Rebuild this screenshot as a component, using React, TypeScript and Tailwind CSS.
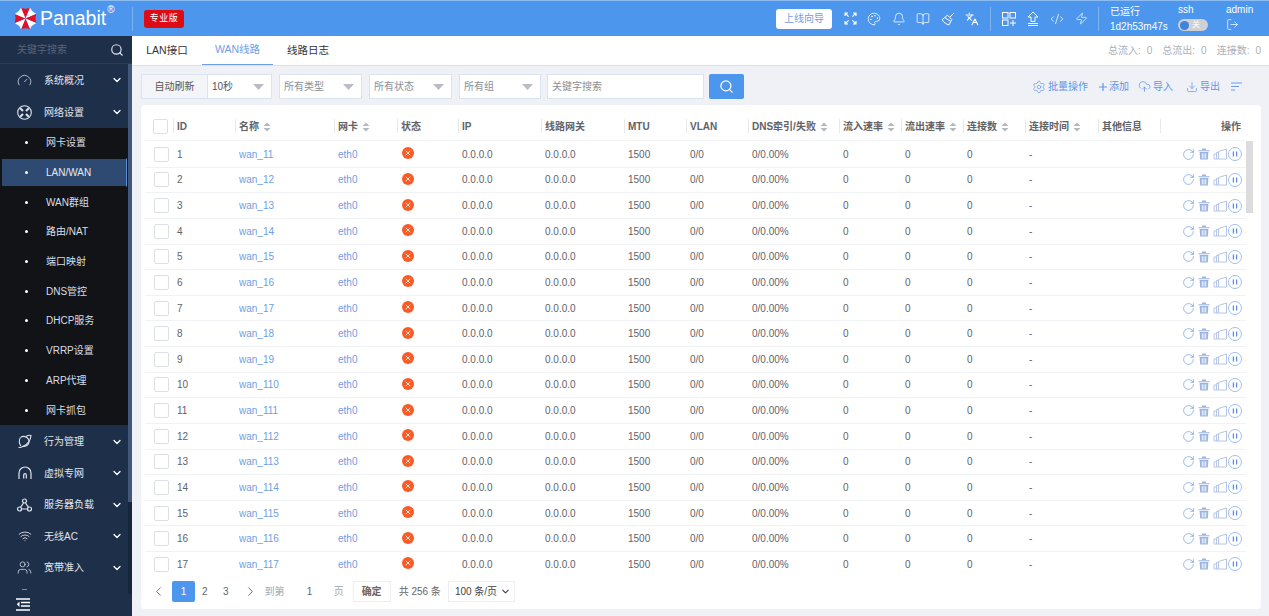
import React from "react";
import { ChevronDown, ChevronLeft, ChevronRight, Search, Gauge, Wifi, Users, Palette, Bell, BookOpen, Languages, CodeXml, Zap, LogOut, Settings, Plus, CloudUpload, Download, RotateCw, X } from "lucide-react";

const sub = ["网卡设置", "LAN/WAN", "WAN群组", "路由/NAT", "端口映射", "DNS管控", "DHCP服务", "VRRP设置", "ARP代理", "网卡抓包"];
const cols = "grid grid-cols-[32px_62px_99px_63px_61px_83px_83px_62px_62px_91px_62px_62px_62px_73px_62px_1fr]";

function Sort() {
  return (
    <svg width="8" height="10" viewBox="0 0 8 10" className="ml-1 shrink-0">
      <path d="M4 0.5 7.5 4H.5Z M.5 6H7.5L4 9.5Z" fill="#b4b8bf" />
    </svg>
  );
}

function Logo() {
  const a = [0, 45, 90, 135, 180, 225, 270, 315];
  return (
    <svg width="23" height="23" viewBox="-12 -12 24 24" className="shrink-0">
      {a.map((d, i) => (
        <path key={d} transform={`rotate(${d})`} d="M0 0 L-4.6 -11.2 Q0 -9.4 4.6 -11.2 Z" fill={i % 2 === 0 ? "#e60f24" : "#ffffff"} />
      ))}
    </svg>
  );
}

function MenuItem({ icon, label, tall }: { icon: React.ReactNode; label: string; tall?: boolean }) {
  return (
    <div className={`flex shrink-0 items-center text-[#e0e5ec] ${tall ? "h-[32px]" : "h-[31.5px]"}`}>
      <div className="flex w-[44px] justify-center pl-[6px] pr-[1px]">{icon}</div>
      <span className="flex-1 text-[10px]">{label}</span>
      <ChevronDown size={12} strokeWidth={2.6} className="mr-[5px] text-white" />
    </div>
  );
}

function Select({ label, w, dark }: { label: string; w: string; dark?: boolean }) {
  return (
    <div className={`flex h-[25px] items-center justify-between border border-[#d9e3f2] bg-white pl-[4px] pr-[7px] text-[10px] ${w} ${dark ? "text-[#555]" : "text-[#8b8f96]"}`}>
      <span>{label}</span>
      <svg width="11" height="6" viewBox="0 0 11 6"><path d="M0 0H11L5.5 6Z" fill="#b9bcc2" /></svg>
    </div>
  );
}

function Toolbtn({ icon, label, tight }: { icon: React.ReactNode; label: string; tight?: boolean }) {
  return (
    <div className={`flex items-center text-[10px] text-[#5f95e8] ${tight ? "gap-0" : "gap-[2px]"}`}>
      {icon}
      <span>{label}</span>
    </div>
  );
}

function Stacked() {
  return (
    <svg width="14" height="12" viewBox="0 0 14 12" fill="none" stroke="#b4c5e6" strokeWidth="1">
      <path d="M5.5 3.5 13.5 1V11H5.5Z" />
      <path d="M5.5 4.5H3.5V11H5.5M3.5 6H1V11H3.5" />
    </svg>
  );
}

function TrashSolid() {
  return (
    <svg width="12" height="12" viewBox="0 0 12 12">
      <path d="M.5 2.2H11.5V3.2H.5ZM4 .6H8V2H4ZM1.6 4H10.4L9.8 11.6H2.2ZM3.8 5.2V10.4H4.7V5.2ZM5.6 5.2V10.4H6.4V5.2ZM7.3 5.2V10.4H8.2V5.2Z" fill="#9ab3e2" fillRule="evenodd" />
    </svg>
  );
}

function PauseRing() {
  return (
    <svg width="14" height="14" viewBox="0 0 14 14" fill="none">
      <circle cx="7" cy="7" r="6.5" stroke="#a2bdee" strokeWidth="1" />
      <path d="M5.4 4.6V9.4M8.6 4.6V9.4" stroke="#5f8fe0" strokeWidth="1.3" />
    </svg>
  );
}

function Cell({ children }: { children: React.ReactNode }) {
  return <span className="flex w-[15.5px] justify-center">{children}</span>;
}

function Row({ n }: { n: number }) {
  return (
    <div className={`${cols} h-[25.63px] shrink-0 items-center border-b border-[#f0f2f6] text-[10px] text-[#5f6368]`}>
      <div className="pl-[9px]"><div className="h-[15px] w-[15px] rounded-[2px] border border-[#dcdfe6] bg-white" /></div>
      <div>{n}</div>
      <div className="text-[#6f9de6]">wan_1{n}</div>
      <div className="text-[#6f9de6]">eth0</div>
      <div className="pl-[1px]">
        <div className="mb-[2px] flex h-[12px] w-[12px] items-center justify-center rounded-full bg-[#fa5a24]">
          <X size={8} strokeWidth={2.5} className="text-white" />
        </div>
      </div>
      <div>0.0.0.0</div>
      <div>0.0.0.0</div>
      <div>1500</div>
      <div>0/0</div>
      <div>0/0.00%</div>
      <div>0</div>
      <div>0</div>
      <div>0</div>
      <div>-</div>
      <div />
      <div className="flex items-center justify-end pr-[3px]">
        <span className="-ml-[1px] flex w-[15.5px] justify-center"><RotateCw size={13} strokeWidth={1.3} className="text-[#6f9de6]" /></span>
        <Cell><TrashSolid /></Cell>
        <Cell><Stacked /></Cell>
        <Cell><PauseRing /></Cell>
      </div>
    </div>
  );
}

function Th({ label, sort, end }: { label: string; sort?: boolean; end?: boolean }) {
  return (
    <div className={`relative flex items-center font-bold ${end ? "justify-end pr-[5px]" : ""}`}>
      <span className="absolute left-[-4px] top-[0px] h-[14px] w-px bg-[#e6e8ec]" />
      <span className="whitespace-nowrap">{label}</span>
      {sort && <Sort />}
    </div>
  );
}

function GridPlus() {
  return (
    <svg width="14" height="14" viewBox="0 0 14 14" fill="none" stroke="#fff" strokeWidth="1">
      <rect x=".5" y=".5" width="5.5" height="5.5" />
      <rect x="8" y=".5" width="5.5" height="5.5" />
      <rect x=".5" y="8" width="5.5" height="5.5" />
      <path d="M8 11H14M11 8V14" />
    </svg>
  );
}

function UploadLine() {
  return (
    <svg width="12" height="15" viewBox="0 0 12 15" fill="none" stroke="#fff" strokeWidth="1">
      <path d="M1 6 6 1 11 6H8V10.5H4V6Z M1 12.5H11 M1 14.5H11" />
    </svg>
  );
}

function CornerArrows() {
  return (
    <svg width="13" height="13" viewBox="0 0 13 13" fill="none" stroke="#fff" strokeWidth="1.1">
      <path d="M1 4V1H4M1 1 4.6 4.6M9 1H12V4M12 1 8.4 4.6M1 9V12H4M1 12 4.6 8.4M12 9V12H9M12 12 8.4 8.4" />
    </svg>
  );
}

function Broom() {
  return (
    <svg width="14" height="14" viewBox="0 0 14 14" fill="none" stroke="#fff" strokeWidth="1" strokeLinejoin="round">
      <path d="M9 5 12.8 1.2M6.5 3.2 10.8 7.5 8 12.8C5.5 12.6 2.8 10.5 1.2 7.6Z M4 5.8 9 9" />
    </svg>
  );
}

function NetX() {
  return (
    <svg width="15" height="15" viewBox="0 0 15 15" fill="none" stroke="#e0e5ec" strokeWidth="1.1">
      <circle cx="7.5" cy="7.5" r="6.8" />
      <path d="M3.2 3.2 6 6M9 9 11.8 11.8M11.8 3.2 9 6M6 9 3.2 11.8" strokeWidth="2" />
    </svg>
  );
}

function Orbit() {
  return (
    <svg width="15" height="15" viewBox="0 0 15 15" fill="none" stroke="#e0e5ec" strokeWidth="1.1">
      <path d="M3.6 3.4A5.4 5.4 0 0 1 12 8.5 5.4 5.4 0 0 1 5.5 12.2" />
      <path d="M3.5 3.5C1.6 6 2 10 4 12M1.5 13.5C4 14 9 11.5 11.5 8 13 6 14 3 14 1.5 12.5 1 10.5 1.5 9 2.5" />
    </svg>
  );
}

function Arch() {
  return (
    <svg width="14" height="14" viewBox="0 0 14 14" fill="none" stroke="#e0e5ec" strokeWidth="1.2">
      <path d="M1 13V7A6 6 0 0 1 13 7V13M5.7 12.5V9A1.3 1.3 0 0 1 8.3 9V12.5" />
    </svg>
  );
}

function Nodes() {
  return (
    <svg width="15" height="14" viewBox="0 0 15 14" fill="none" stroke="#e0e5ec" strokeWidth="1.2">
      <circle cx="7.5" cy="3" r="2" />
      <circle cx="2.5" cy="11" r="2" />
      <circle cx="12.5" cy="11" r="2" />
      <path d="M6.5 5 3.5 9.3M8.5 5 11.5 9.3M4.5 11H10.5" />
    </svg>
  );
}

function SortLines() {
  return (
    <svg width="12" height="9" viewBox="0 0 12 9" fill="none" stroke="#6f9de6" strokeWidth="1">
      <path d="M0 1H11M0 4.5H8M0 8H4" />
    </svg>
  );
}

export default function App() {
  return (
    <div className="flex h-[616px] w-[1269px] flex-col overflow-hidden bg-[#eff1f6] font-['Liberation_Sans','Noto_Sans_CJK_SC',sans-serif]">
      <header className="flex h-[36px] shrink-0 items-center border-t border-[#8dbcf3] bg-[#4c96ee] text-white">
        <div className="ml-[14px] flex w-[118px] items-center">
          <Logo />
          <span className="ml-[3px] text-[19.5px] leading-none">Panabit</span>
          <span className="mb-[17px] ml-[1px] text-[10px] leading-none">®</span>
        </div>
        <div className="h-[24px] w-px bg-[#7db2f1]" />
        <div className="ml-[11px] flex h-[18px] w-[40px] items-center justify-center rounded-[3px] bg-[#dd0b14] text-[9px] tracking-[0.5px]">专业版</div>
        <div className="flex-1" />
        <div className="flex h-[20px] w-[56px] items-center justify-center rounded-[3px] bg-white text-[10px] text-[#6f9de6]">上线向导</div>
        <div className="ml-[11.5px] flex items-center gap-[10.5px]">
          <CornerArrows />
          <Palette size={14} strokeWidth={1.3} />
          <Bell size={14} strokeWidth={1.3} />
          <BookOpen size={14} strokeWidth={1.3} />
          <Broom />
          <Languages size={14} strokeWidth={1.8} />
        </div>
        <div className="ml-[11px] h-[24px] w-px bg-[#7db2f1]" />
        <div className="ml-[10.5px] flex items-center gap-[11px]">
          <GridPlus />
          <UploadLine />
          <CodeXml size={14} strokeWidth={1.3} />
          <Zap size={13} strokeWidth={1.3} />
        </div>
        <div className="ml-[10.5px] h-[24px] w-px bg-[#7db2f1]" />
        <div className="ml-[11px] w-[68px] text-[10px] leading-[15px]">
          <div>已运行</div>
          <div>1d2h53m47s</div>
        </div>
        <div className="-mt-[3px] w-[48px] text-[10px] leading-[14px]">
          <div>ssh</div>
          <div className="mt-[2px] flex h-[12px] w-[30px] items-center rounded-full bg-[#cdd1d6] pl-[2px]">
            <span className="h-[9px] w-[9px] rounded-full bg-[#3f83dd]" />
            <span className="ml-[3px] text-[8px] leading-none text-white">关</span>
          </div>
        </div>
        <div className="-mt-[3px] w-[43px] text-[10px] leading-[14px]">
          <div>admin</div>
          <LogOut size={13} strokeWidth={1.3} className="mt-[1px]" />
        </div>
      </header>
      <div className="flex min-h-0 flex-1">
        <aside className="flex w-[132px] shrink-0 flex-col bg-[#1e2f4a]">
          <div className="flex h-[28px] shrink-0 items-center justify-between border-b border-[#2d3d55] pl-[17px] pr-[8px] text-[10px] text-[#56657a]">
            <span>关键字搜索</span>
            <Search size={14} strokeWidth={2} className="text-[#e0e5ec]" />
          </div>
          <div className="relative flex min-h-0 flex-1 flex-col overflow-hidden pr-[4.5px]">
            <span className="absolute right-0 top-0 h-full w-[4.5px] bg-[#17263c]" />
            <span className="absolute right-0 top-0 h-[438px] w-[4.5px] bg-[#41587c]" />
            <MenuItem tall icon={<Gauge size={15} strokeWidth={1.2} />} label="系统概况" />
            <MenuItem tall icon={<NetX />} label="网络设置" />
            <div className="flex shrink-0 flex-col bg-[#111316]">
              {sub.map((s, i) => (
                <div key={s} className={`flex h-[29.7px] items-center text-[10px] ${i === 1 ? "ml-[2px] mr-[1px] border-y border-r border-y-[#111316] border-r-[#5d8ed6] bg-[#2f4a72] text-[#e4e9f1]" : "text-[#d9dee6]"}`}>
                  <span className={`h-[3px] w-[3px] rounded-full bg-white ${i === 1 ? "ml-[23px]" : "ml-[25px]"}`} />
                  <span className="ml-[18px]">{s}</span>
                </div>
              ))}
            </div>
            <div className="h-[1px] shrink-0" />
            <MenuItem icon={<Orbit />} label="行为管理" />
            <MenuItem icon={<Arch />} label="虚拟专网" />
            <MenuItem icon={<Nodes />} label="服务器负载" />
            <MenuItem icon={<Wifi size={14} strokeWidth={1.5} />} label="无线AC" />
            <MenuItem icon={<Users size={15} strokeWidth={1.2} />} label="宽带准入" />
            <div className="ml-[22px] mt-[6px] h-px w-[5px] shrink-0 bg-[#7f8a9a]" />
          </div>
          <div className="flex h-[22px] shrink-0 items-center bg-[#1e2f4a] pb-[2px] pl-[16px]">
            <svg width="14" height="13" viewBox="0 0 14 13" fill="none" stroke="#fff" strokeWidth="1.4">
              <path d="M0 1H14M5 4.5H14M5 8H14M0 12H14" />
              <path d="M3.5 3.5 0.8 6.3 3.5 9Z" fill="#fff" stroke="none" />
            </svg>
          </div>
        </aside>
        <main className="flex min-w-0 flex-1 flex-col">
          <div className="flex h-[30px] shrink-0 items-center border-b border-[#dde1e8] bg-white text-[10.5px] text-[#333]">
            <div className="flex h-full w-[70px] items-center justify-center">LAN接口</div>
            <div className="flex h-full w-[71px] items-center justify-center border-b border-[#6f9de6] text-[#6f9de6]">WAN线路</div>
            <div className="flex h-full w-[70px] items-center justify-center">线路日志</div>
            <div className="flex-1" />
            <div className="mr-[8px] flex gap-[10px] text-[10px] text-[#adb0b6]">
              <span>总流入:<span className="ml-[6px]">0</span></span>
              <span>总流出:<span className="ml-[6px]">0</span></span>
              <span>连接数:<span className="ml-[6px]">0</span></span>
            </div>
          </div>
          <div className="flex h-[39px] shrink-0 items-center pl-[9px] pr-[26px] pt-[2px]">
            <div className="flex h-[25px] w-[66px] items-center justify-center border border-r-0 border-[#d9e3f2] bg-[#f4f5f8] text-[10px] text-[#555]">自动刷新</div>
            <Select label="10秒" w="w-[65px]" dark />
            <Select label="所有类型" w="ml-[7px] w-[83px]" />
            <Select label="所有状态" w="ml-[7px] w-[83px]" />
            <Select label="所有组" w="ml-[7px] w-[82px]" />
            <div className="ml-[6px] flex h-[25px] w-[157px] items-center border border-[#d9e3f2] bg-white pl-[4px] text-[10px] text-[#8b8f96]">关键字搜索</div>
            <div className="ml-[5px] flex h-[25px] w-[35px] items-center justify-center rounded-[2px] bg-[#4c96ee]">
              <Search size={15} className="text-white" />
            </div>
            <div className="flex-1" />
            <div className="flex items-center gap-[9px]">
              <Toolbtn icon={<Settings size={14} strokeWidth={1.1} />} label="批量操作" />
              <Toolbtn tight icon={<Plus size={12} strokeWidth={2.4} />} label="添加" />
              <Toolbtn icon={<CloudUpload size={13} strokeWidth={1.4} />} label="导入" />
              <div className="ml-[4px]"><Toolbtn icon={<Download size={12} strokeWidth={1.4} />} label="导出" /></div>
              <div className="ml-[2px]"><SortLines /></div>
            </div>
          </div>
          <div className="ml-[9px] mr-[8px] flex min-h-0 flex-1 flex-col rounded-[4px] bg-white">
            <div className={`${cols} ml-[4px] mr-[15px] mt-[8px] h-[28px] shrink-0 items-center border-b border-[#f0f2f6] text-[10px] text-[#5f6368]`}>
              <div className="pl-[8px]"><div className="h-[15px] w-[15px] rounded-[2px] border border-[#dcdfe6] bg-white" /></div>
              <Th label="ID" />
              <Th label="名称" sort />
              <Th label="网卡" sort />
              <Th label="状态" />
              <Th label="IP" />
              <Th label="线路网关" />
              <Th label="MTU" />
              <Th label="VLAN" />
              <Th label="DNS牵引/失败" sort />
              <Th label="流入速率" sort />
              <Th label="流出速率" sort />
              <Th label="连接数" sort />
              <Th label="连接时间" sort />
              <Th label="其他信息" />
              <Th label="操作" end />
            </div>
            <div className="relative ml-[4px] flex h-[431px] shrink-0 flex-col overflow-hidden pr-[15px] pt-[1px]">
              {Array.from({ length: 17 }, (_, i) => <Row key={i} n={i + 1} />)}
              <span className="absolute right-[8px] top-0 h-[72px] w-[7px] bg-[#dcdcdc]" />
            </div>
            <div className="flex h-[38px] shrink-0 items-center pl-[10px] text-[10px] text-[#666]">
              <ChevronLeft size={15} strokeWidth={1.5} />
              <div className="ml-[6px] flex h-[21px] w-[23px] items-center justify-center rounded-[2px] bg-[#4c96ee] text-white">1</div>
              <span className="ml-[7px]">2</span>
              <span className="ml-[15.5px]">3</span>
              <ChevronRight size={15} strokeWidth={1.5} className="ml-[14px]" />
              <span className="ml-[7px] text-[#a6a9ad]">到第</span>
              <div className="ml-[9px] flex h-[21px] w-[32px] items-center justify-center">1</div>
              <span className="ml-[8px] text-[#a6a9ad]">页</span>
              <div className="ml-[9px] flex h-[21px] w-[38px] items-center justify-center border border-[#eceef2] font-bold">确定</div>
              <span className="ml-[8px]">共 256 条</span>
              <div className="ml-[7px] flex h-[21px] w-[67px] items-center justify-between border border-[#eceef2] pl-[6px] pr-[3px] text-[#444]">
                <span>100 条/页</span>
                <ChevronDown size={11} strokeWidth={2.6} />
              </div>
            </div>
          </div>
          <div className="h-[7px] shrink-0" />
        </main>
      </div>
    </div>
  );
}
